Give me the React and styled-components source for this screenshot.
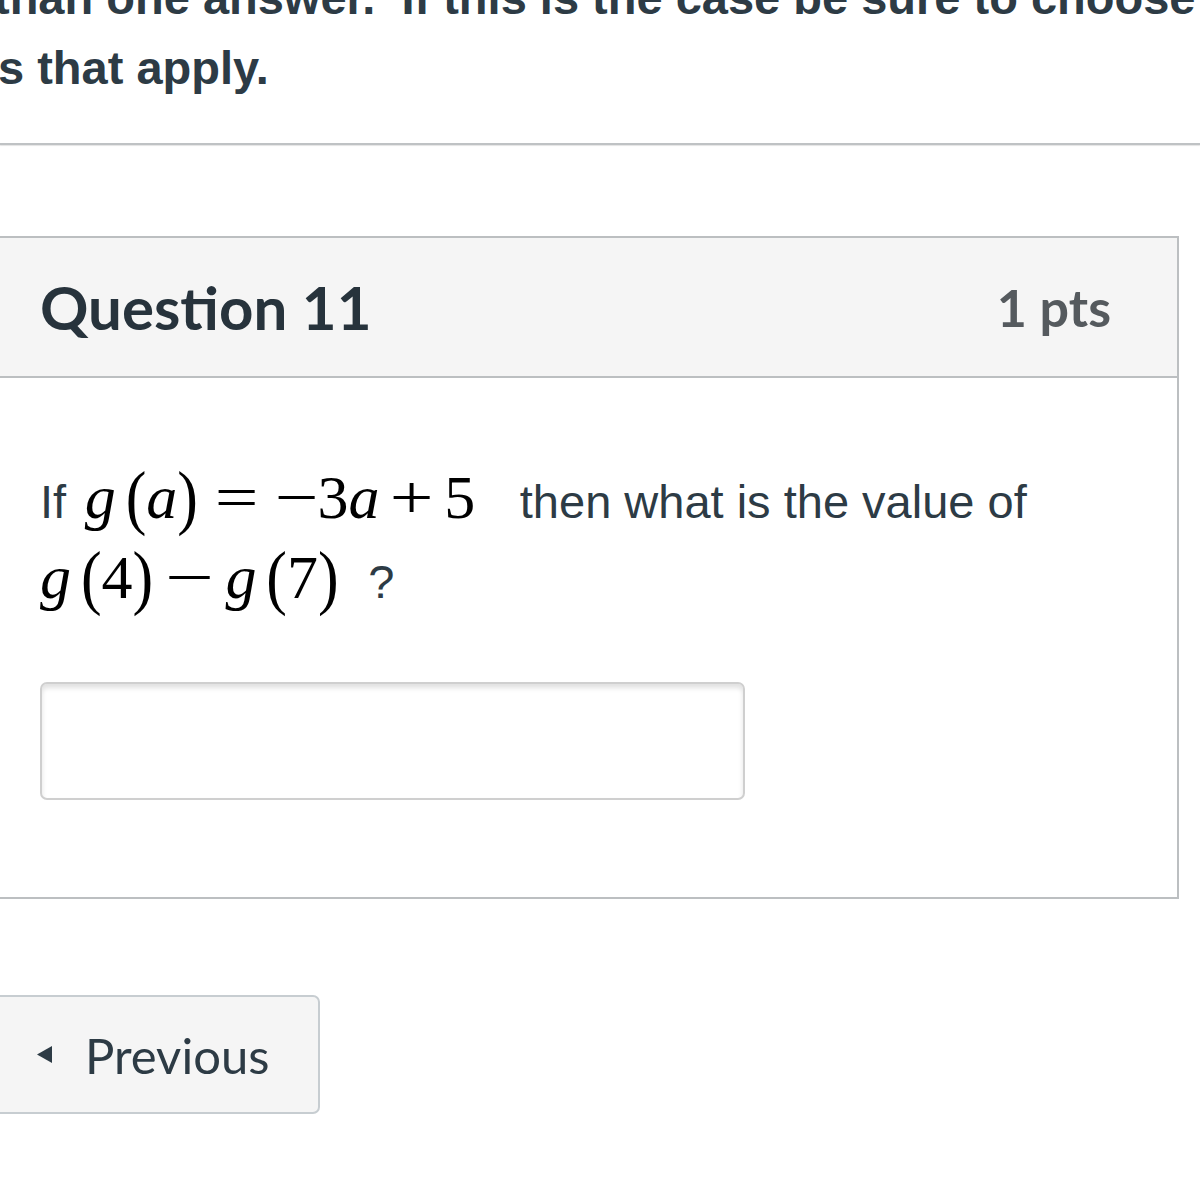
import React from 'react';
import styled, { createGlobalStyle } from 'styled-components';

const GlobalStyle = createGlobalStyle`
  html, body {
    margin: 0;
    padding: 0;
    background: #ffffff;
    overflow: hidden;
  }
  body {
    font-family: "Liberation Sans", Arial, sans-serif;
    color: #2d3b45;
  }
`;

const Page = styled.div`
  width: 1200px;
  height: 1200px;
  overflow: hidden;
`;

const Intro = styled.div`
  margin-top: -37px;
  font-family: "Liberation Sans", Arial, sans-serif;
  font-weight: 700;
  font-size: 47px;
  line-height: 70px;
  color: #2d3b45;
`;

const IntroLine = styled.div`
  white-space: pre;
  margin-left: ${props => props.shift}px;
`;

const Rule = styled.hr`
  margin: 40px 0 0;
  border: 0;
  border-top: 2px solid #bfc2c4;
  box-shadow: 0 1px 1px #e4e4e4;
  width: 1200px;
`;

const QuestionBox = styled.section`
  margin-top: 91px;
  margin-left: -10px;
  width: 1189px;
  box-sizing: border-box;
  border: 2px solid #bcbfc1;
  background: #ffffff;
`;

const Header = styled.header`
  height: 140px;
  box-sizing: border-box;
  display: flex;
  align-items: center;
  justify-content: space-between;
  padding: 0 66px 0 48px;
  background: #f5f5f5;
  border-bottom: 2px solid #bcbfc1;
  font-family: Lato, "Liberation Sans", sans-serif;
  font-weight: 700;
`;

const Title = styled.h2`
  margin: 0;
  font-size: 60px;
  font-weight: 700;
  color: #27333c;
`;

const Points = styled.div`
  font-size: 52px;
  color: #555a5e;
`;

const Body = styled.div`
  padding: 84px 48px 97px;
`;

const QuestionText = styled.div`
  font-family: "Liberation Sans", Arial, sans-serif;
  font-size: 47px;
  line-height: 80px;
  color: #2d3b45;
`;

const Math = styled.span`
  font-family: "Liberation Serif", "Times New Roman", serif;
  font-size: 62px;
  line-height: 1;
  color: #000000;
  margin: ${props => props.gap || '0 0.35em'};
  white-space: nowrap;
`;

const V = styled.i`
  font-style: italic;
`;

const Paren = styled.span`
  display: inline-block;
  transform: scaleY(1.15);
  margin-left: ${props => (props.open ? '0.16em' : '0')};
`;

const Op = styled.span`
  display: inline-block;
  transform: scaleX(${props => props.stretch || 1.25});
  margin: 0 ${props => props.space || '0.34em'};
`;

const AnswerInput = styled.input`
  display: block;
  margin-top: 60px;
  width: 705px;
  height: 118px;
  box-sizing: border-box;
  border: 2px solid #cfcfcf;
  border-radius: 7px;
  background: #ffffff;
  box-shadow: inset 0 4px 5px rgba(0, 0, 0, 0.12);
  outline: none;
  font-size: 40px;
  padding: 0 16px;
`;

const Nav = styled.nav`
  margin-top: 96px;
  margin-left: -10px;
`;

const NavButton = styled.button`
  display: flex;
  align-items: center;
  gap: 33px;
  width: 330px;
  height: 119px;
  box-sizing: border-box;
  padding: 0 0 0 45px;
  background: #f5f5f5;
  border: 2px solid #c7cdd1;
  border-radius: 7px;
  font-family: Lato, "Liberation Sans", sans-serif;
  font-size: 49px;
  font-weight: 400;
  color: #2d3b45;
  cursor: pointer;
`;

const Caret = () => (
  <svg width="15" height="17" viewBox="0 0 15 17" aria-hidden="true">
    <path d="M15 0 L0 8.5 L15 17 Z" fill="#2d3b45" />
  </svg>
);

const G = ({ arg }) => (
  <>
    <V>g</V>
    <Paren open>(</Paren>
    {arg}
    <Paren>)</Paren>
  </>
);

export default function App() {
  return (
    <Page>
      <GlobalStyle />
      <Intro>
        <IntroLine shift={-6}>{'than one answer.  If this is the case be sure to choose'}</IntroLine>
        <IntroLine shift={-2}>s that apply.</IntroLine>
      </Intro>
      <Rule />
      <QuestionBox>
        <Header>
          <Title>Question 11</Title>
          <Points>1 pts</Points>
        </Header>
        <Body>
          <QuestionText>
            If
            <Math gap="0 0.72em 0 0.3em">
              <G arg={<V>a</V>} />
              <Op>=</Op>
              <Op space="0.06em">−</Op>3<V>a</V>
              <Op space="0.24em">+</Op>5
            </Math>
            then what is the value of
            <br />
            <Math gap="0 0.48em 0 0">
              <G arg="4" />
              <Op space="0.3em" stretch={1.4}>−</Op>
              <G arg="7" />
            </Math>
            ?
          </QuestionText>
          <AnswerInput type="text" aria-label="Answer" />
        </Body>
      </QuestionBox>
      <Nav>
        <NavButton type="button">
          <Caret />
          Previous
        </NavButton>
      </Nav>
    </Page>
  );
}
